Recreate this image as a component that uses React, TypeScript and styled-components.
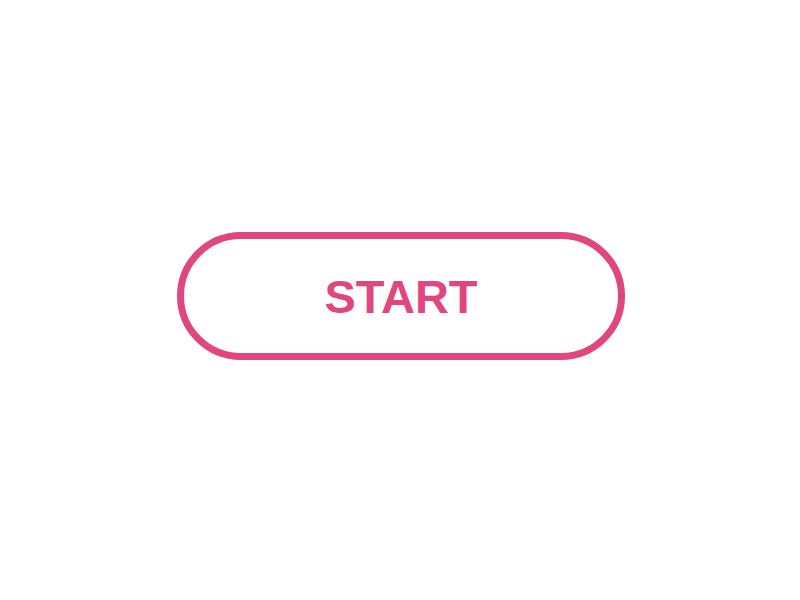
import React from 'react';
import styled, { createGlobalStyle } from 'styled-components';

const GlobalStyle = createGlobalStyle`
  html, body {
    margin: 0;
    padding: 0;
    background: #ffffff;
  }
`;

const Screen = styled.div`
  width: 800px;
  height: 600px;
  display: flex;
  align-items: center;
  justify-content: center;
`;

const StartButton = styled.button`
  box-sizing: border-box;
  width: 448px;
  height: 128px;
  margin: 0 2px 8px 4px;
  border: 7px solid #e0477f;
  border-radius: 64px;
  background: #ffffff;
  color: #e0477f;
  font-family: "Liberation Sans", Arial, sans-serif;
  font-weight: 700;
  font-size: 47px;
  letter-spacing: 0;
  padding: 0;
  cursor: pointer;
`;

export default function App() {
  return (
    <>
      <GlobalStyle />
      <Screen>
        <StartButton>START</StartButton>
      </Screen>
    </>
  );
}
